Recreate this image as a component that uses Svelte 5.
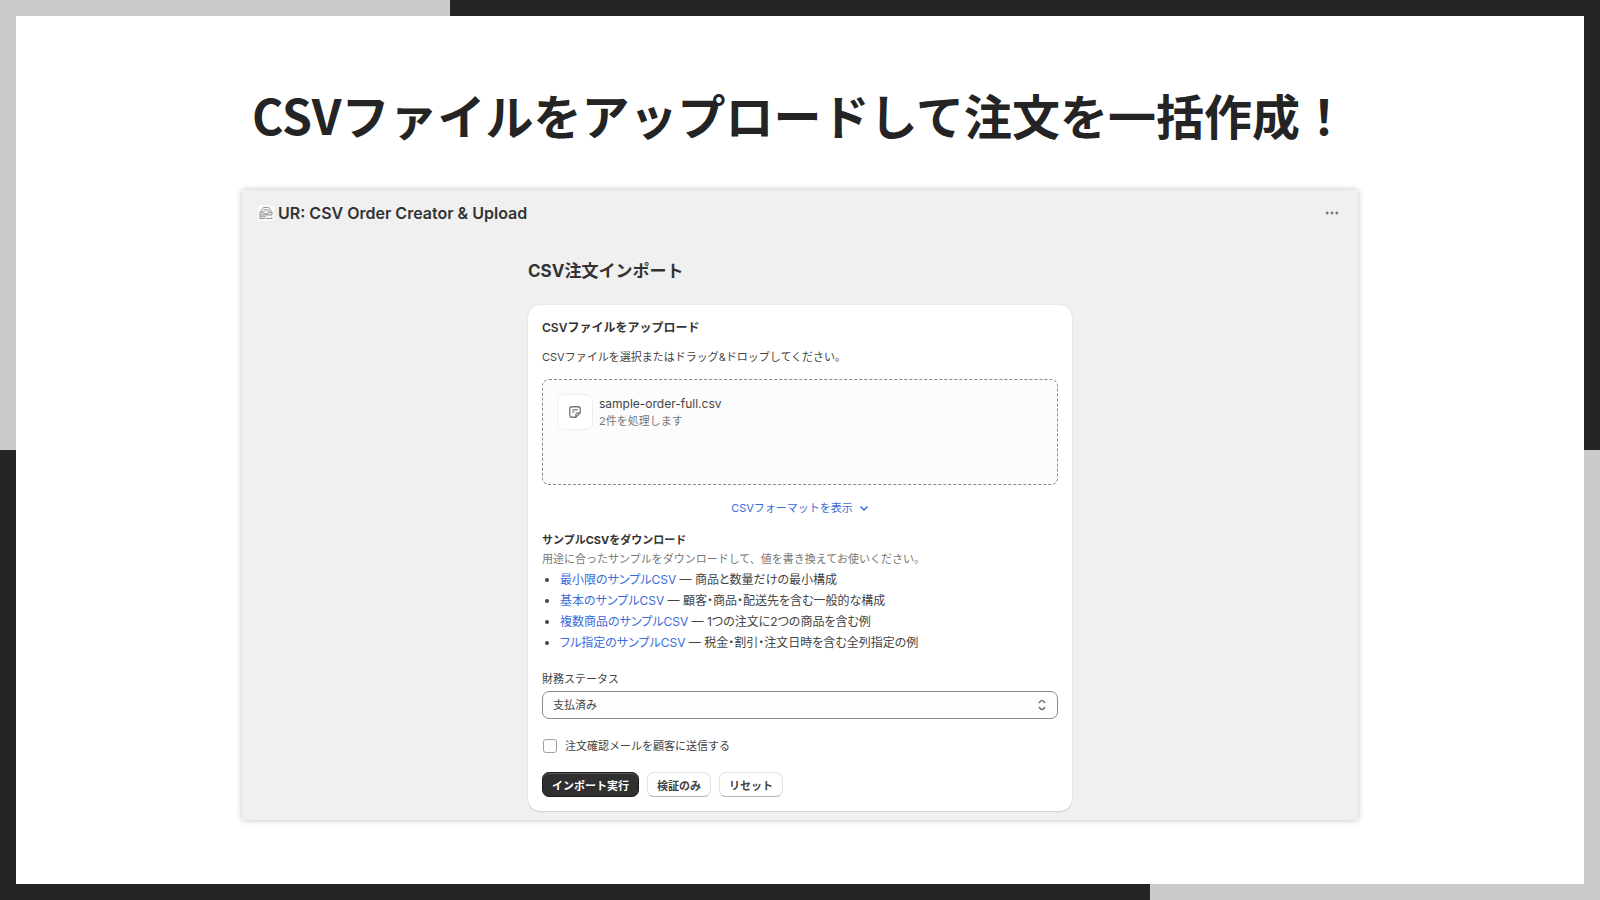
<script lang="ts">
  let status = $state('paid');
  let notify = $state(false);
  let formatOpen = $state(false);

  const samples = [
    { name: '最小限のサンプルCSV', note: '商品と数量だけの最小構成' },
    { name: '基本のサンプルCSV', note: '顧客・商品・配送先を含む一般的な構成' },
    { name: '複数商品のサンプルCSV', note: '1つの注文に2つの商品を含む例' },
    { name: 'フル指定のサンプルCSV', note: '税金・割引・注文日時を含む全列指定の例' },
  ];
</script>

<div class="frame">
  <main class="slide">
    <h1 class="headline">CSVファイルをアップロードして注文を一括作成！</h1>

    <div class="app">
      <header class="bar">
        <svg class="logo" viewBox="0 0 16 16" aria-hidden="true">
          <rect width="16" height="16" rx="2" fill="#fafafa" stroke="none" />
          <path d="M2 8 4.500 3.500Q5 2.500 6 2.500H10Q11 2.500 11.500 3.500L14 8" />
          <path d="M2 7H5Q5.500 9 8 9Q10.500 9 11 7H14V10H2Z" fill="#dedede" />
          <path d="M2 10V13.500H7M2 11.800H8M8 13.500H14V12" />
          <path d="M5.500 4.500H10.500M4.500 6H11.500" stroke-width=".6" />
        </svg>
        <h2 class="app-name">UR: CSV Order Creator &amp; Upload</h2>
        <button class="more" type="button" aria-label="その他の操作">
          <svg viewBox="0 0 16 16" aria-hidden="true">
            <circle cx="2.500" cy="8" r="1.600" />
            <circle cx="8" cy="8" r="1.600" />
            <circle cx="13.500" cy="8" r="1.600" />
          </svg>
        </button>
      </header>

      <div class="page">
        <h2 class="page-title">CSV注文インポート</h2>

        <form class="card" onsubmit={(e) => e.preventDefault()}>
          <h3 class="card-title">CSVファイルをアップロード</h3>
          <p class="hint">CSVファイルを選択またはドラッグ&amp;ドロップしてください。</p>

          <label class="dropzone">
            <input class="file" type="file" accept=".csv" />
            <span class="thumb">
              <svg viewBox="0 0 16 16" aria-hidden="true">
                <path d="M14 9V4.500Q14 2 11.500 2H4.500Q2 2 2 4.500V11.500Q2 14 4.500 14H9L14 9H11Q9 9 9 11V14" />
                <path d="M5 5.500H11M5 8H7" />
              </svg>
            </span>
            <span class="file-info">
              <span class="file-name">sample-order-full.csv</span>
              <span class="file-count">2件を処理します</span>
            </span>
          </label>

          <button class="toggle" type="button" aria-expanded={formatOpen} onclick={() => (formatOpen = !formatOpen)}>
            CSVフォーマットを表示
            <svg viewBox="0 0 10 10" aria-hidden="true"><path d="M1.500 3.500 5 7 8.500 3.500" /></svg>
          </button>

          <h4 class="sub-title">サンプルCSVをダウンロード</h4>
          <p class="hint muted">用途に合ったサンプルをダウンロードして、値を書き換えてお使いください。</p>
          <ul class="samples">
            {#each samples as s}
              <li><a href="#sample">{s.name}</a> — {s.note}</li>
            {/each}
          </ul>

          <label class="field-label" for="status">財務ステータス</label>
          <div class="select">
            <select id="status" bind:value={status}>
              <option value="paid">支払済み</option>
              <option value="pending">支払い待ち</option>
            </select>
            <svg viewBox="0 0 10 14" aria-hidden="true"><path d="M2 5Q5 0 8 5M2 9Q5 14 8 9" /></svg>
          </div>

          <label class="check">
            <input type="checkbox" bind:checked={notify} />
            注文確認メールを顧客に送信する
          </label>

          <div class="actions">
            <button class="btn primary" type="submit">インポート実行</button>
            <button class="btn" type="button">検証のみ</button>
            <button class="btn" type="reset">リセット</button>
          </div>
        </form>
      </div>
    </div>
  </main>
</div>

<style>
  :global(body) {
    margin: 0;
  }
  .frame {
    box-sizing: border-box;
    min-height: 100vh;
    padding: 16px;
    display: flex;
    background:
      linear-gradient(#cbcbcb, #cbcbcb) left top / 450px 450px no-repeat,
      linear-gradient(#cbcbcb, #cbcbcb) right bottom / 450px 450px no-repeat,
      #242424;
    font-family: Inter, 'Noto Sans CJK JP', sans-serif;
    color: #444;
  }
  .slide {
    flex: 1;
    min-width: 0;
    padding: 62px 24px;
    background: #fff;
  }
  h1, h2, h3, h4, p, ul {
    margin: 0;
  }
  h2, h3, h4 {
    color: #333;
  }
  button, select, input {
    font: inherit;
    color: inherit;
  }
  .headline {
    font-family: 'Noto Sans CJK JP', sans-serif;
    font-size: 48px;
    line-height: 72px;
    font-weight: 700;
    text-align: center;
    color: #242424;
  }
  .app {
    max-width: 1116px;
    margin: 40px auto 0;
    background: #f0f0f0;
    border-radius: 2px;
    box-shadow: 0 0 6px rgba(0, 0, 0, 0.25);
  }
  .bar {
    display: flex;
    align-items: center;
    gap: 4px;
    height: 46px;
    margin: 0 16px;
    padding-bottom: 2px;
    border-bottom: 1px solid #ededed;
  }
  .logo {
    width: 16px;
    height: 16px;
    fill: none;
    stroke: #8c8c8c;
    stroke-width: 0.9;
  }
  .app-name {
    font-size: 16px;
    line-height: 24px;
    font-weight: 600;
  }
  .more {
    margin-left: auto;
    padding: 0 3px;
    height: 24px;
    border: 0;
    background: none;
  }
  .more svg {
    display: block;
    width: 14px;
    height: 14px;
    fill: #777;
  }
  .page {
    max-width: 544px;
    margin: 0 auto;
    padding: 20px 0 9px;
  }
  .page-title {
    font-size: 17px;
    line-height: 24px;
    font-weight: 700;
  }
  .card {
    margin-top: 22px;
    padding: 14px;
    background: #fff;
    border-radius: 12px;
    box-shadow: 0 1px 1px rgba(0, 0, 0, 0.12), 0 0 1px rgba(0, 0, 0, 0.2);
  }
  .card-title {
    font-size: 12px;
    line-height: 18px;
    font-weight: 600;
  }
  .hint {
    margin: 11px 0 13px;
    font-size: 11px;
    line-height: 18px;
  }
  .muted {
    margin: 1px 0;
    color: #777;
  }
  .dropzone {
    position: relative;
    display: flex;
    align-items: flex-start;
    gap: 6px;
    box-sizing: border-box;
    min-height: 106px;
    padding: 14px;
    border: 1px dashed #8a8a8a;
    border-radius: 7px;
    background: #fcfcfc;
    cursor: pointer;
  }
  .file {
    position: absolute;
    inset: 0;
    opacity: 0;
    cursor: pointer;
  }
  .thumb {
    display: grid;
    place-items: center;
    width: 34px;
    height: 34px;
    border: 1px solid #eee;
    border-radius: 7px;
    background: #fff;
  }
  .thumb svg {
    width: 14px;
    height: 14px;
    fill: none;
    stroke: #777;
    stroke-width: 1.5;
    stroke-linejoin: round;
  }
  .file-info {
    display: flex;
    flex-direction: column;
    padding-top: 1px;
    font-size: 11px;
    line-height: 18px;
  }
  .file-name {
    font-size: 12px;
    line-height: 17px;
  }
  .file-count {
    color: #777;
  }
  .toggle {
    display: flex;
    align-items: center;
    gap: 6px;
    margin: 14px auto;
    padding: 0;
    border: 0;
    background: none;
    font-size: 11px;
    line-height: 18px;
    color: #3b6bdc;
    cursor: pointer;
  }
  .toggle svg {
    width: 10px;
    height: 10px;
    fill: none;
    stroke: currentColor;
    stroke-width: 1.5;
  }
  .sub-title {
    font-size: 11px;
    line-height: 18px;
    font-weight: 700;
  }
  .samples {
    padding-left: 18px;
    font-size: 12px;
    line-height: 21px;
    font-feature-settings: 'palt';
  }
  .samples a {
    color: #3b6bdc;
    text-decoration: none;
  }
  .field-label {
    display: block;
    margin-top: 17px;
    font-size: 11px;
    line-height: 18px;
  }
  .select {
    position: relative;
    margin-top: 3px;
  }
  .select select {
    appearance: none;
    display: block;
    box-sizing: border-box;
    width: 100%;
    height: 28px;
    padding: 0 28px 0 10px;
    border: 1px solid #8a8a8a;
    border-radius: 7px;
    background: #fdfdfd;
    font-size: 11px;
  }
  .select svg {
    position: absolute;
    right: 11px;
    top: 7px;
    width: 10px;
    height: 14px;
    fill: none;
    stroke: #777;
    stroke-width: 1.5;
    pointer-events: none;
  }
  .check {
    display: flex;
    align-items: center;
    gap: 8px;
    margin: 18px 0 17px;
    font-size: 11px;
    line-height: 18px;
  }
  .check input {
    appearance: none;
    box-sizing: border-box;
    width: 14px;
    height: 14px;
    margin: 0 0 0 1px;
    border: 1px solid #a0a0a0;
    border-radius: 3px;
    background: #fdfdfd;
  }
  .check input:checked {
    background: #303030;
  }
  .actions {
    display: flex;
    gap: 8px;
  }
  .btn {
    height: 25px;
    padding: 0 9px;
    border: 1px solid #e3e3e3;
    border-bottom-color: #b5b5b5;
    border-radius: 7px;
    background: #fff;
    font-size: 11px;
    font-weight: 600;
    cursor: pointer;
  }
  .primary {
    border-color: #1a1a1a;
    background: #303030;
    box-shadow: inset 0 1px 0 #5a5a5a;
    color: #fff;
  }
</style>
